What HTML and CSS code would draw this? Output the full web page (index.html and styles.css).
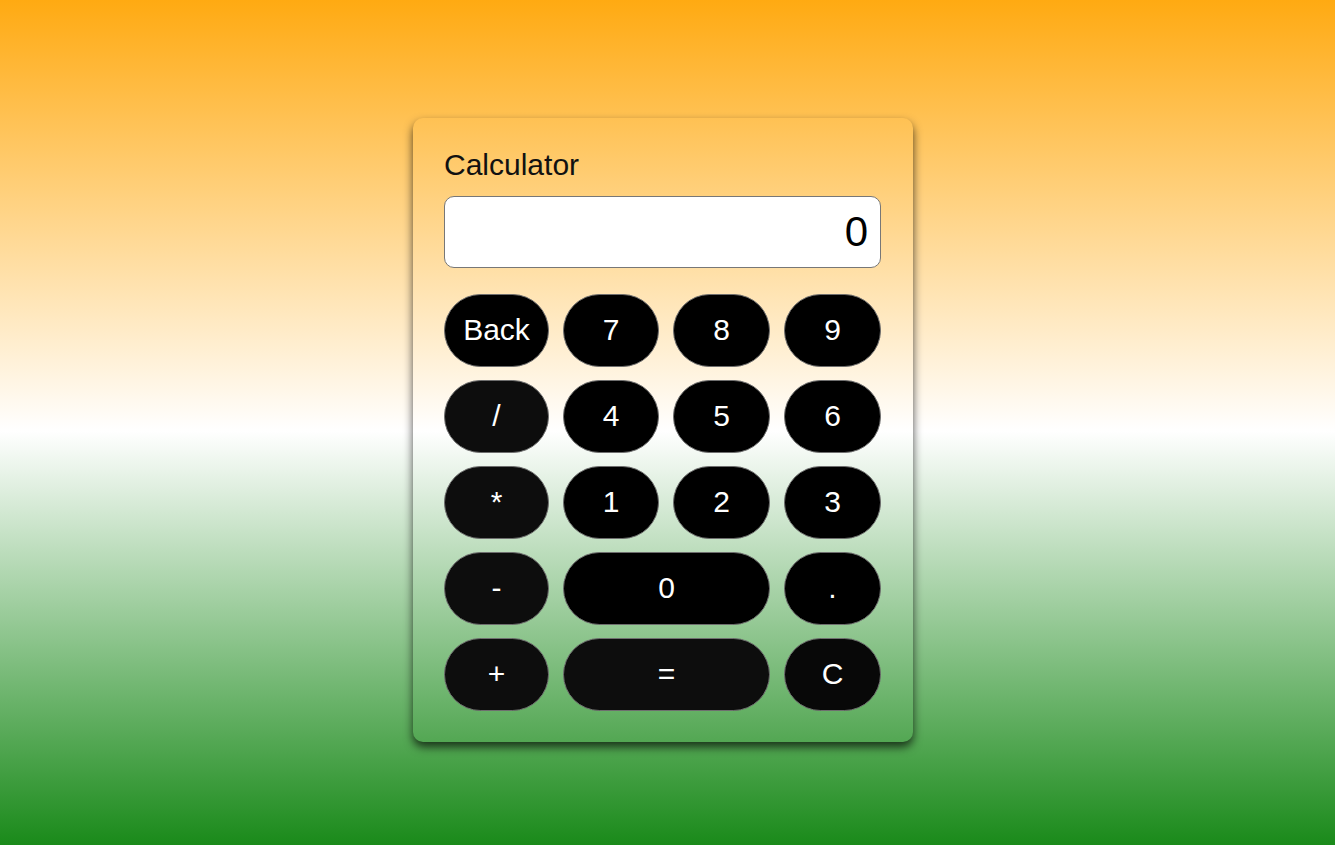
FILE: index.html
```html
<!DOCTYPE html>
<html lang="en">
<head>
<meta charset="utf-8">
<title>Calculator</title>
<link rel="stylesheet" href="styles.css">
</head>
<body>
  <div class="calc">
    <h1 class="calc-title">Calculator</h1>
    <div class="display">0</div>
    <div class="keys">
      <button class="key">Back</button>
      <button class="key num">7</button>
      <button class="key num">8</button>
      <button class="key num">9</button>
      <button class="key op">/</button>
      <button class="key num">4</button>
      <button class="key num">5</button>
      <button class="key num">6</button>
      <button class="key op">*</button>
      <button class="key num">1</button>
      <button class="key num">2</button>
      <button class="key num">3</button>
      <button class="key op">-</button>
      <button class="key num wide">0</button>
      <button class="key num">.</button>
      <button class="key op">+</button>
      <button class="key op wide">=</button>
      <button class="key clear">C</button>
    </div>
  </div>
</body>
</html>
```

FILE: styles.css
```css
html {
  background: linear-gradient(to bottom, #ffaa12 0%, #ffffff 51%, #1a8a1a 100%);
  min-height: 100%;
}

body {
  margin: 0;
  min-height: 100vh;
  box-sizing: border-box;
  padding: 15px 9px 0 0;
  display: flex;
  justify-content: center;
  align-items: center;
  font-family: "Liberation Sans", Arial, sans-serif;
}

.calc {
  width: 500px;
  box-sizing: border-box;
  padding: 30px 32px 31px 31px;
  border-radius: 10px;
  box-shadow: 0 5px 10px rgba(0, 0, 0, 0.7);
}

.calc-title {
  margin: 0 0 14px;
  font-size: 30px;
  line-height: 34px;
  font-weight: normal;
  color: #111;
}

.display {
  height: 72px;
  box-sizing: border-box;
  background: #fff;
  border: 1px solid #777;
  border-radius: 10px;
  display: flex;
  align-items: center;
  justify-content: flex-end;
  padding-right: 12px;
  padding-bottom: 1px;
  font-size: 42px;
  color: #000;
  margin-bottom: 26px;
}

.keys {
  display: grid;
  grid-template-columns: 105px 96px 97px 97px;
  grid-auto-rows: 73px;
  column-gap: 14px;
  row-gap: 13px;
}

.key {
  font-family: "Liberation Sans", Arial, sans-serif;
  font-size: 30px;
  color: #fff;
  background: #000;
  border: 1px solid #6e6e6e;
  border-radius: 40px;
  padding: 0 0 2px;
  margin: 0;
  cursor: pointer;
}

.key.op {
  background: #0d0d0d;
}

.key.clear {
  background: #080808;
}

.key.wide {
  grid-column: span 2;
}
```
